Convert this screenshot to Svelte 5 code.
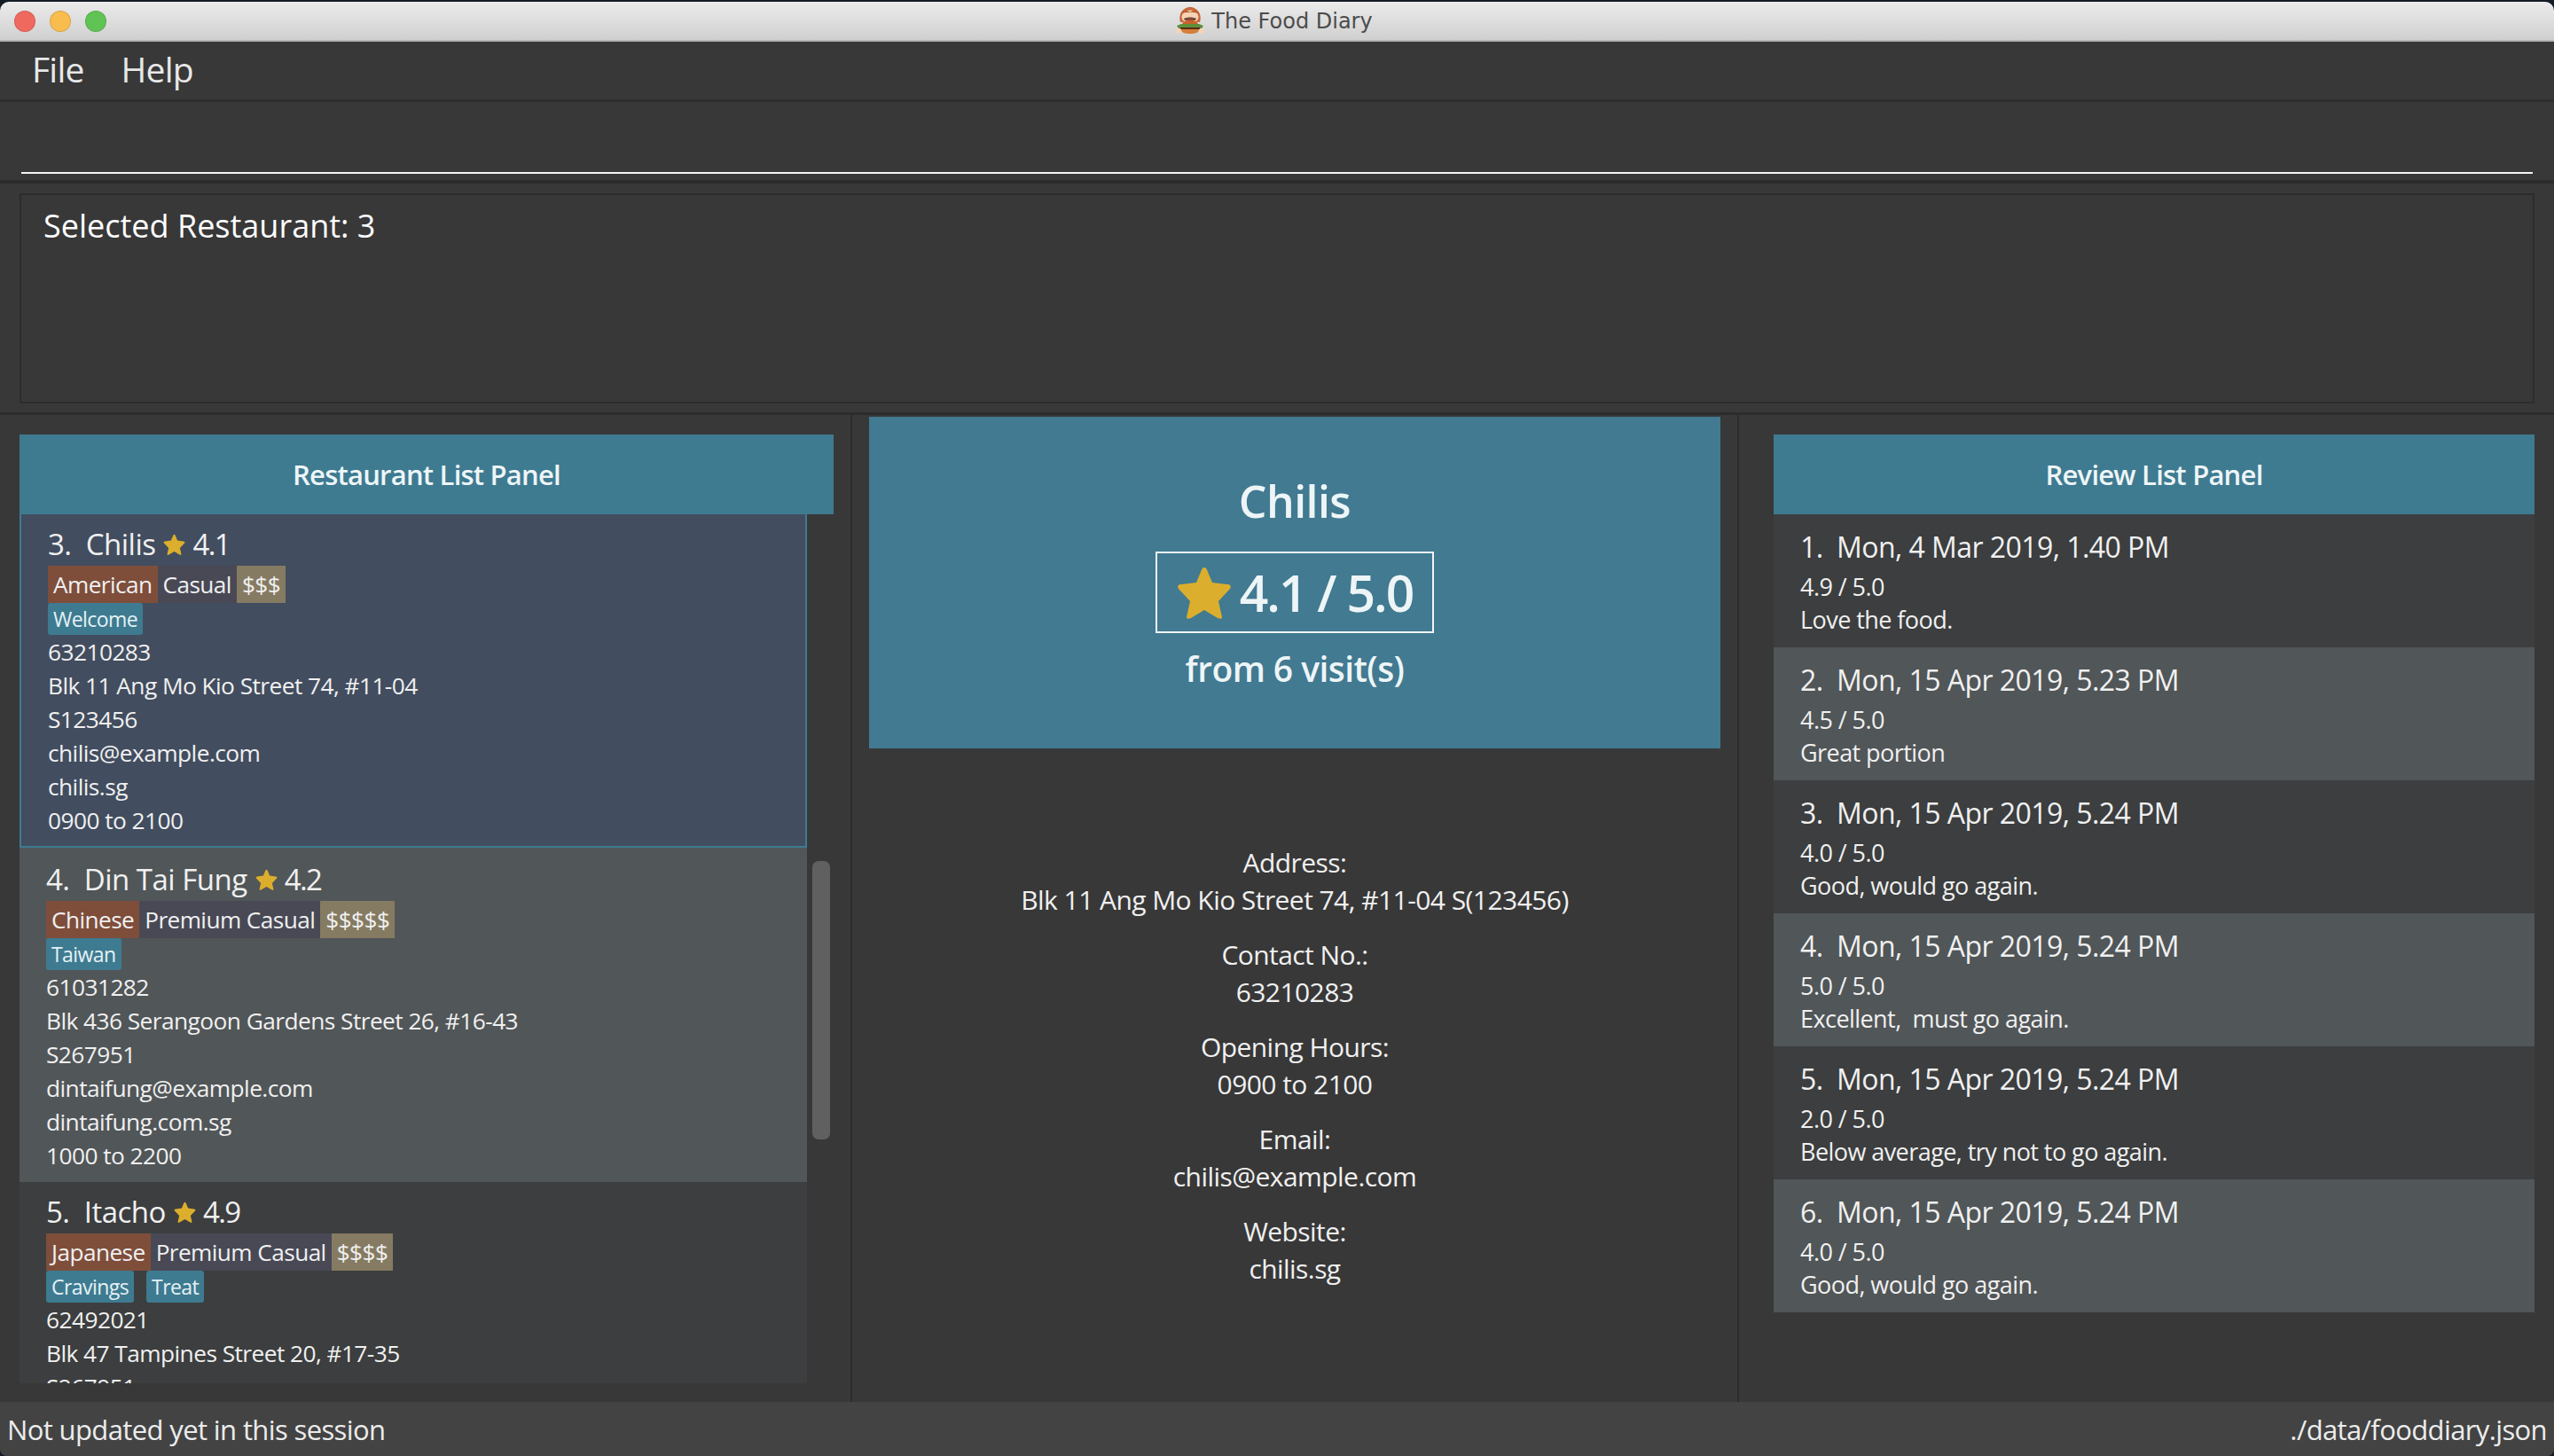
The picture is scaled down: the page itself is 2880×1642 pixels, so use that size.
<script>
  const restaurants = [
    {
      index: 3, name: 'Chilis', rating: '4.1', cuisine: 'American', occasion: 'Casual', price: '$$$',
      tags: ['Welcome'],
      lines: ['63210283', 'Blk 11 Ang Mo Kio Street 74, #11-04', 'S123456', 'chilis@example.com', 'chilis.sg', '0900 to 2100'],
      kind: 'selected'
    },
    {
      index: 4, name: 'Din Tai Fung', rating: '4.2', cuisine: 'Chinese', occasion: 'Premium Casual', price: '$$$$$',
      tags: ['Taiwan'],
      lines: ['61031282', 'Blk 436 Serangoon Gardens Street 26, #16-43', 'S267951', 'dintaifung@example.com', 'dintaifung.com.sg', '1000 to 2200'],
      kind: 'even'
    },
    {
      index: 5, name: 'Itacho', rating: '4.9', cuisine: 'Japanese', occasion: 'Premium Casual', price: '$$$$',
      tags: ['Cravings', 'Treat'],
      lines: ['62492021', 'Blk 47 Tampines Street 20, #17-35', 'S267951'],
      kind: 'odd'
    }
  ];

  const details = [
    ['Address:', 'Blk 11 Ang Mo Kio Street 74, #11-04 S(123456)'],
    ['Contact No.:', '63210283'],
    ['Opening Hours:', '0900 to 2100'],
    ['Email:', 'chilis@example.com'],
    ['Website:', 'chilis.sg']
  ];

  const reviews = [
    ['Mon, 4 Mar 2019, 1.40 PM', '4.9 / 5.0', 'Love the food.'],
    ['Mon, 15 Apr 2019, 5.23 PM', '4.5 / 5.0', 'Great portion'],
    ['Mon, 15 Apr 2019, 5.24 PM', '4.0 / 5.0', 'Good, would go again.'],
    ['Mon, 15 Apr 2019, 5.24 PM', '5.0 / 5.0', 'Excellent,  must go again.'],
    ['Mon, 15 Apr 2019, 5.24 PM', '2.0 / 5.0', 'Below average, try not to go again.'],
    ['Mon, 15 Apr 2019, 5.24 PM', '4.0 / 5.0', 'Good, would go again.']
  ];
</script>

{#snippet star(cls)}
  <svg class={cls} viewBox="0 0 62 60" aria-hidden="true">
    <path d="M31 2 C33 2 34 4 35 7 L40 19 L57 21 C60 21 62 23 60 26 L47 40 L51 58 L50 60 L46 59 L31 50 L16 59 L12 60 L11 58 L15 40 L2 26 C0 23 2 21 5 21 L22 19 L27 7 C28 4 29 2 31 2 Z" fill="#dbae2d"/>
  </svg>
{/snippet}

<div class="window">
  <header class="titlebar">
    <div class="lights">
      <span class="light red"></span>
      <span class="light yellow"></span>
      <span class="light green"></span>
    </div>
    <div class="title">
      <svg class="appicon" viewBox="0 0 32 32" aria-hidden="true">
        <!-- hair and face behind the burger -->
        <path d="M5 17 C2 7 9 0 16 0 C23 0 30 7 27 17 Z" fill="#c8683a"/>
        <ellipse cx="16" cy="11" rx="9.5" ry="7.5" fill="#f6d3b4"/>
        <path d="M5 8 C8 3 13 3 16 6 C19 3 24 3 27 8 C23 5 9 5 5 8 Z" fill="#b95a2f"/>
        <path d="M9 13 C12 11 20 11 23 13 L22 15 L10 15 Z" fill="#7a4a38"/>
        <!-- burger -->
        <path d="M7 20 C7 13 25 13 25 20 Z" fill="#c9622c"/>
        <path d="M1 21 L6 19 H26 L31 21 L29 24 H3 Z" fill="#5e8f3a"/>
        <rect x="5" y="23" width="22" height="2" fill="#5a2a14"/>
        <path d="M6 25 H26 C26 29 22 30 16 30 C10 30 6 29 6 25 Z" fill="#d57f38"/>
        <circle cx="3" cy="27" r="3" fill="#f6d3b4"/>
        <circle cx="29" cy="27" r="3" fill="#f6d3b4"/>
      </svg>
      <span>The Food Diary</span>
    </div>
  </header>

  <nav class="menubar">
    <span>File</span>
    <span>Help</span>
  </nav>

  <div class="command"><div class="command-line"></div></div>

  <div class="result">
    <div class="result-box">Selected Restaurant: 3</div>
  </div>

  <main class="panels">
    <section class="col left">
      <div class="panel-head">Restaurant List Panel</div>
      <div class="list-wrap">
        <div class="list">
          {#each restaurants as r}
            <article class="card {r.kind}">
              <div class="name">
                <span>{r.index}.&nbsp; {r.name}</span>
                {@render star('star-small')}
                <span class="name-rating">{r.rating}</span>
              </div>
              <div class="labels">
                <span class="label cuisine">{r.cuisine}</span>
                <span class="label occasion">{r.occasion}</span>
                <span class="label price">{r.price}</span>
              </div>
              <div class="tags">
                {#each r.tags as t}
                  <span class="tag">{t}</span>
                {/each}
              </div>
              {#each r.lines as line}
                <div class="line">{line}</div>
              {/each}
            </article>
          {/each}
        </div>
        <div class="track"><div class="thumb"></div></div>
      </div>
    </section>

    <section class="col center">
      <div class="hero">
        <div class="hero-name">Chilis</div>
        <div class="hero-rating">
          {@render star('star-big')}
          <span>4.1 / 5.0</span>
        </div>
        <div class="hero-visits">from 6 visit(s)</div>
      </div>
      <div class="details">
        {#each details as [label, value]}
          <div class="detail">
            <div>{label}</div>
            <div>{value}</div>
          </div>
        {/each}
      </div>
    </section>

    <section class="col right">
      <div class="panel-head">Review List Panel</div>
      {#each reviews as [date, score, text], i}
        <article class="review" class:even={i % 2 === 1}>
          <div class="review-date">{i + 1}.&nbsp; {date}</div>
          <div class="review-line">{score}</div>
          <div class="review-line">{text}</div>
        </article>
      {/each}
    </section>
  </main>

  <footer class="status">
    <span>Not updated yet in this session</span>
    <span>./data/fooddiary.json</span>
  </footer>
</div>

<style>
  :global(body) {
    margin: 0;
    background: #141c26;
  }

  .window {
    width: 2880px;
    height: 1640px;
    margin-top: 2px;
    display: flex;
    flex-direction: column;
    background: #383838;
    color: #f0f0f0;
    font-family: "Open Sans", "Noto Sans", sans-serif;
    letter-spacing: -0.035em;
    border-radius: 10px 10px 8px 8px;
    overflow: hidden;
  }

  .titlebar {
    height: 43px;
    flex: none;
    position: relative;
    display: flex;
    align-items: center;
    justify-content: center;
    background: linear-gradient(#ebebeb, #d0d0d0);
    border-bottom: 2px solid #b4b4b4;
  }

  .lights {
    position: absolute;
    left: 16px;
    top: 10px;
    display: flex;
    gap: 16px;
  }

  .light {
    width: 24px;
    height: 24px;
    border-radius: 50%;
    box-sizing: border-box;
    border: 1px solid rgba(0, 0, 0, 0.12);
  }

  .red { background: #f0695f; }
  .yellow { background: #f8bd4e; }
  .green { background: #60c455; }

  .title {
    display: flex;
    align-items: center;
    gap: 8px;
    margin-left: -6px;
    padding-top: 1px;
    color: #4c4c4c;
    font-family: "DejaVu Sans", sans-serif;
    font-size: 24px;
    letter-spacing: 0;
  }

  .appicon {
    width: 32px;
    height: 32px;
    margin-top: -1px;
  }

  .menubar {
    height: 68px;
    flex: none;
    box-sizing: border-box;
    padding: 0 0 5px 36px;
    display: flex;
    align-items: center;
    gap: 42px;
    font-size: 39px;
    letter-spacing: -0.02em;
    color: #e8e8e8;
    border-bottom: 3px solid #2e2e2e;
  }

  .command {
    height: 92px;
    flex: none;
    box-sizing: border-box;
    padding: 79px 24px 0;
    border-bottom: 4px solid #2c2c2c;
  }

  .command-line {
    height: 2px;
    background: #f4f4f4;
  }

  .result {
    height: 261px;
    flex: none;
    box-sizing: border-box;
    padding: 11px 22px 10px;
    border-bottom: 3px solid #2c2c2c;
  }

  .result-box {
    height: 100%;
    box-sizing: border-box;
    padding: 10px 25px;
    border: 2px solid #2c2c2c;
    font-size: 36px;
    letter-spacing: 0;
    color: #fff;
  }

  .panels {
    flex: 1;
    min-height: 0;
    display: grid;
    grid-template-columns: 961px 1000px 919px;
  }

  .col {
    min-height: 0;
    box-sizing: border-box;
  }

  .left {
    padding: 22px 19px 21px 22px;
    border-right: 2px solid #2c2c2c;
    display: flex;
    flex-direction: column;
  }

  .panel-head {
    height: 90px;
    flex: none;
    display: flex;
    align-items: center;
    justify-content: center;
    background: #3e7b91;
    color: #eef5f7;
    font-size: 31px;
    font-weight: 600;
    letter-spacing: -0.025em;
  }

  .list-wrap {
    flex: 1;
    min-height: 0;
    display: flex;
  }

  .list {
    width: 888px;
    flex: none;
    overflow: hidden;
  }

  .track {
    width: 20px;
    margin-left: 6px;
  }

  .thumb {
    width: 20px;
    height: 314px;
    margin-top: 391px;
    border-radius: 7px;
    background: #606060;
  }

  .card {
    box-sizing: border-box;
    padding: 8px 30px 10px;
  }

  .card.selected {
    background: #424d5f;
    border: 2px solid #3e7b91;
    border-top: 0;
    height: 376px;
  }

  .card.even {
    background: #515658;
    height: 377px;
    padding-top: 10px;
  }

  .card.odd {
    background: #3c3e3f;
  }

  .name {
    height: 50px;
    display: flex;
    align-items: center;
    gap: 9px;
    font-size: 33px;
    font-weight: 500;
    letter-spacing: -0.015em;
    white-space: pre;
  }

  .name-rating {
    margin-left: -1px;
    letter-spacing: -0.05em;
  }

  .star-small {
    width: 25px;
    height: 24px;
    margin-top: 2px;
  }

  .labels {
    height: 42px;
    display: flex;
  }

  .label {
    display: flex;
    align-items: center;
    padding: 0 6px;
    font-size: 26.2px;
    font-weight: 500;
  }

  .cuisine { background: #7e4e3b; }
  .occasion { background: #484955; }
  .price { background: #857b62; }

  .tags {
    height: 36px;
    display: flex;
    gap: 14px;
  }

  .tag {
    display: flex;
    align-items: center;
    padding: 0 6px;
    border-radius: 3px;
    background: #3e7b91;
    color: #e6f1f5;
    font-size: 23px;
    font-weight: 500;
  }

  .line {
    height: 38px;
    line-height: 38px;
    font-size: 26.3px;
    font-weight: 500;
    white-space: pre;
  }

  .center {
    padding: 2px 19px 0 19px;
    border-right: 2px solid #2c2c2c;
  }

  .hero {
    height: 374px;
    display: flex;
    flex-direction: column;
    align-items: center;
    background: #417a91;
    color: #eef5f7;
    font-weight: 600;
  }

  .hero-name {
    margin-top: 62px;
    font-size: 50px;
    line-height: 66px;
  }

  .hero-rating {
    width: 314px;
    height: 92px;
    margin-top: 24px;
    box-sizing: border-box;
    display: flex;
    align-items: center;
    justify-content: center;
    gap: 9px;
    border: 2px solid #f0f5f7;
    font-size: 57px;
    letter-spacing: -0.035em;
  }

  .star-big {
    width: 62px;
    height: 60px;
  }

  .hero-visits {
    margin-top: 15px;
    font-size: 39px;
    line-height: 50px;
  }

  .details {
    padding-top: 108px;
    display: flex;
    flex-direction: column;
    gap: 20px;
    text-align: center;
    font-size: 30px;
    font-weight: 500;
    line-height: 42px;
  }

  .right {
    padding: 22px 22px 0 39px;
  }

  .review {
    height: 150px;
    box-sizing: border-box;
    padding: 12px 30px 0;
    background: #3c3e3f;
  }

  .review.even {
    background: #515658;
  }

  .review-date {
    height: 51px;
    line-height: 50px;
    font-size: 32px;
    font-weight: 500;
  }

  .review-line {
    height: 37px;
    line-height: 37px;
    font-size: 27px;
    font-weight: 500;
    white-space: pre;
  }

  .status {
    height: 61px;
    flex: none;
    display: flex;
    align-items: center;
    justify-content: space-between;
    padding: 0 8px;
    background: #434343;
    font-size: 31px;
    letter-spacing: -0.02em;
    color: #ececec;
  }
</style>
